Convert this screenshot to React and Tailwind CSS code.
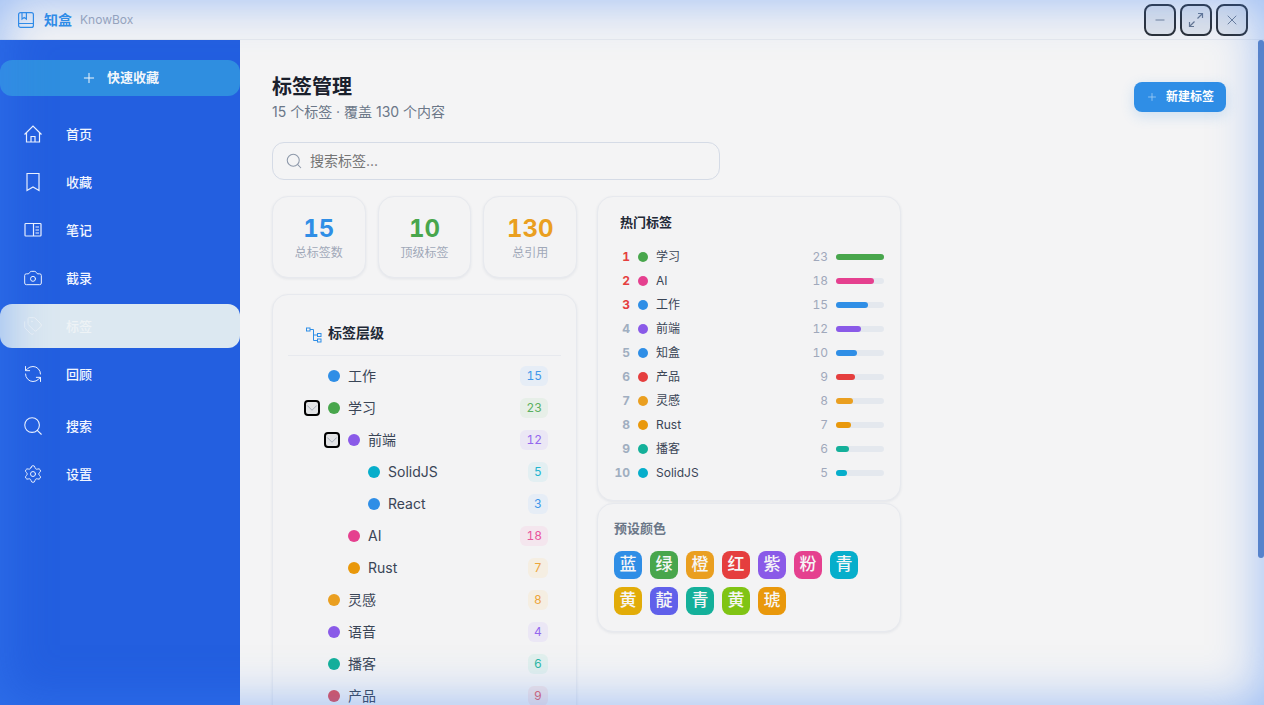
import React from 'react';
import { Camera, Tags, RefreshCcw, Search, Settings, Plus, Minus, X, ChevronDown } from 'lucide-react';

const HomeIcon = ({ className }) => (
  <svg className={className} viewBox="0 0 22 22" fill="none" stroke="currentColor" strokeWidth="1.2">
    <path d="M2.5 11.5 11 3l8.5 8.5M4.5 9.5V19h13V9.5M9 19v-5.5h4V19" />
  </svg>
);

const BookmarkIcon = ({ className }) => (
  <svg className={className} viewBox="0 0 22 22" fill="none" stroke="currentColor" strokeWidth="1.2">
    <path d="M5 2.5h12v17l-6-3.5-6 3.5z" />
  </svg>
);

const NotesIcon = ({ className }) => (
  <svg className={className} viewBox="0 0 22 22" fill="none" stroke="currentColor" strokeWidth="1.2">
    <rect x="3" y="4.5" width="16" height="12.5" rx="0.8" />
    <path d="M11.5 4.5V17M13.5 8h3.5M13.5 11h3.5M13.5 14h3.5" />
  </svg>
);

const LogoIcon = ({ className }) => (
  <svg className={className} viewBox="0 0 18 18" fill="none" stroke="currentColor" strokeWidth="1.2">
    <rect x="1.6" y="1.6" width="14.8" height="14.8" rx="2" />
    <path d="M5 1.6V8l2.2-1.6L9.4 8V1.6M1.6 12.5h14.8" />
  </svg>
);

const ResizeIcon = ({ className }) => (
  <svg className={className} viewBox="0 0 16 16" fill="none" stroke="currentColor" strokeWidth="1.2">
    <path d="M9.5 6.5 14.5 1.5M10 1.5h4.5V6M6.5 9.5l-5 5M1.5 10v4.5H6" />
  </svg>
);

const TreeIcon = ({ className }) => (
  <svg className={className} viewBox="0 0 16 16" fill="none" stroke="currentColor" strokeWidth="1">
    <rect x="0.5" y="1" width="3.5" height="3" />
    <rect x="11.5" y="6.5" width="3.5" height="3" />
    <rect x="11.5" y="12" width="3.5" height="3" />
    <path d="M4 2.5h3.5V13.5h4M7.5 8h4" />
  </svg>
);

const navItems = [
  { label: '首页', icon: HomeIcon, size: 'h-[22px] w-[22px]' },
  { label: '收藏', icon: BookmarkIcon, size: 'h-[22px] w-[22px]' },
  { label: '笔记', icon: NotesIcon, size: 'h-[22px] w-[22px]' },
  { label: '截录', icon: Camera, size: 'h-5 w-5 mx-px' },
  { label: '标签', icon: Tags, size: 'h-5 w-5 mx-px', active: true },
  { label: '回顾', icon: RefreshCcw, size: 'h-5 w-5 mx-px' },
];

const navItemsBottom = [
  { label: '搜索', icon: Search, size: 'h-[22px] w-[22px]' },
  { label: '设置', icon: Settings, size: 'h-5 w-5 mx-px' },
];

const treeRows = [
  { name: '工作', count: 15, level: 0, dot: 'bg-[#2f8ee6]', badge: 'bg-[#e6edf6] text-[#3f97ea]' },
  { name: '学习', count: 23, level: 0, open: true, dot: 'bg-[#48a64c]', badge: 'bg-[#e7efe8] text-[#5bb060]' },
  { name: '前端', count: 12, level: 1, open: true, dot: 'bg-[#8a5ae8]', badge: 'bg-[#ebe7f5] text-[#9467ee]' },
  { name: 'SolidJS', count: 5, level: 2, dot: 'bg-[#06aecb]', badge: 'bg-[#e3eff2] text-[#22b5d0]' },
  { name: 'React', count: 3, level: 2, dot: 'bg-[#2f8ee6]', badge: 'bg-[#e6edf6] text-[#3f97ea]' },
  { name: 'AI', count: 18, level: 1, dot: 'bg-[#e5408f]', badge: 'bg-[#f4e6ee] text-[#e9549c]' },
  { name: 'Rust', count: 7, level: 1, dot: 'bg-[#e9980b]', badge: 'bg-[#f5eee2] text-[#eda53a]' },
  { name: '灵感', count: 8, level: 0, dot: 'bg-[#ea9f20]', badge: 'bg-[#f5eee2] text-[#eda53a]' },
  { name: '语音', count: 4, level: 0, dot: 'bg-[#8a5ae8]', badge: 'bg-[#ebe7f5] text-[#9467ee]' },
  { name: '播客', count: 6, level: 0, dot: 'bg-[#14b09a]', badge: 'bg-[#e2f0ed] text-[#2cb8a4]' },
  { name: '产品', count: 9, level: 0, dot: 'bg-[#e0505a]', badge: 'bg-[#f2e4e6] text-[#e2606a]' },
];

const levelPadding = ['pl-[40px]', 'pl-[60px]', 'pl-[80px]'];
const chevronLeft = ['left-[16px]', 'left-[36px]', 'left-[56px]'];

const hotTags = [
  { name: '学习', count: 23, dot: 'bg-[#48a64c]', bar: 'w-full' },
  { name: 'AI', count: 18, dot: 'bg-[#e5408f]', bar: 'w-[79%]' },
  { name: '工作', count: 15, dot: 'bg-[#2f8ee6]', bar: 'w-[66%]' },
  { name: '前端', count: 12, dot: 'bg-[#8a5ae8]', bar: 'w-[52%]' },
  { name: '知盒', count: 10, dot: 'bg-[#2f8ee6]', bar: 'w-[44%]' },
  { name: '产品', count: 9, dot: 'bg-[#e53e3e]', bar: 'w-[40%]' },
  { name: '灵感', count: 8, dot: 'bg-[#ea9f20]', bar: 'w-[35%]' },
  { name: 'Rust', count: 7, dot: 'bg-[#e9980b]', bar: 'w-[31%]' },
  { name: '播客', count: 6, dot: 'bg-[#14b09a]', bar: 'w-[27%]' },
  { name: 'SolidJS', count: 5, dot: 'bg-[#06aecb]', bar: 'w-[22%]' },
];

const swatches = [
  { name: '蓝', color: 'bg-[#2f8ee6]' },
  { name: '绿', color: 'bg-[#48a64c]' },
  { name: '橙', color: 'bg-[#ea9f20]' },
  { name: '红', color: 'bg-[#e53e3e]' },
  { name: '紫', color: 'bg-[#8a5ae8]' },
  { name: '粉', color: 'bg-[#e5408f]' },
  { name: '青', color: 'bg-[#06aecb]' },
  { name: '黄', color: 'bg-[#e2ac08]' },
  { name: '靛', color: 'bg-[#6060ea]' },
  { name: '青', color: 'bg-[#14b09a]' },
  { name: '黄', color: 'bg-[#80c414]' },
  { name: '琥', color: 'bg-[#e9980b]' },
];

const stats = [
  { value: 15, label: '总标签数', color: 'text-[#2f8ee6]' },
  { value: 10, label: '顶级标签', color: 'text-[#48a64c]' },
  { value: 130, label: '总引用', color: 'text-[#ea9f20]' },
];

const cardClass = 'rounded-2xl border border-[#e7e9ee] bg-[#f3f3f4] shadow-[0_1px_3px_rgba(30,50,90,0.08)]';

const NavItem = ({ item }) => {
  const Icon = item.icon;
  return (
    <div
      className={`flex h-11 items-center gap-[22px] rounded-xl pl-[22px] text-[13px] font-medium ${
        item.active ? 'bg-[#dce8f1] text-[#eef3f6]' : 'text-[#f2f6ff]'
      }`}
    >
      <Icon className={item.size} strokeWidth={1.2} />
      <span className="mt-0.5">{item.label}</span>
    </div>
  );
};

const WindowButton = ({ children }) => (
  <button className="flex h-8 w-8 items-center justify-center rounded-lg border-2 border-[#2a2e33] bg-[#e1e4e9] text-[#66748a]">
    {children}
  </button>
);

const TreeRow = ({ row }) => (
  <div className={`relative flex h-8 items-center pr-[13px] ${levelPadding[row.level]}`}>
    {row.open && (
      <button
        className={`absolute top-2 flex h-4 w-4 items-center justify-center rounded-[4px] border-2 border-black bg-[#e2e3e5] text-[#98a0b0] ${chevronLeft[row.level]}`}
      >
        <ChevronDown className="h-[18px] w-[18px] shrink-0" strokeWidth={1.1} />
      </button>
    )}
    <span className={`h-3 w-3 rounded-full ${row.dot}`} />
    <span className="ml-2 flex-1 text-sm text-[#3a4556]">{row.name}</span>
    <span className={`flex h-5 min-w-5 items-center justify-center rounded-md px-1.5 text-xs tabular-nums ${row.badge}`}>
      {row.count}
    </span>
  </div>
);

const HotRow = ({ tag, rank }) => (
  <div className="flex h-6 items-center">
    <span className={`w-4 text-right text-xs font-bold tabular-nums ${rank <= 3 ? 'text-[#e53e3e]' : 'text-[#a0aec0]'}`}>{rank}</span>
    <span className={`ml-2 h-2.5 w-2.5 rounded-full ${tag.dot}`} />
    <span className="ml-2 flex-1 text-xs text-[#3a4556]">{tag.name}</span>
    <span className="text-xs tabular-nums text-[#a0a8bb]">{tag.count}</span>
    <div className="ml-2 h-1.5 w-12 rounded-full bg-[#e4e8ee]">
      <div className={`h-1.5 rounded-full ${tag.dot} ${tag.bar}`} />
    </div>
  </div>
);

export default function App() {
  return (
    <div className="relative flex h-screen w-full flex-col overflow-hidden bg-[#f4f4f5] font-['Inter','Noto_Sans_CJK_SC',sans-serif]">
      <header className="flex h-10 shrink-0 items-center justify-between border-b border-[#e6e8ec] bg-[#f4f4f5] pl-[17px] pr-4">
        <div className="flex items-center">
          <LogoIcon className="h-[18px] w-[18px] text-[#2f8ee6]" />
          <span className="ml-[9px] text-sm font-semibold text-[#2f8ee6]">知盒</span>
          <span className="ml-2 text-xs text-[#a0a8b8]">KnowBox</span>
        </div>
        <div className="flex gap-1">
          <WindowButton><Minus className="h-3.5 w-3.5" strokeWidth={1.5} /></WindowButton>
          <WindowButton><ResizeIcon className="h-4 w-4" /></WindowButton>
          <WindowButton><X className="h-4 w-4" strokeWidth={1.4} /></WindowButton>
        </div>
      </header>

      <div className="relative flex min-h-0 flex-1">
        <aside className="flex w-60 shrink-0 flex-col bg-[#235fe0] pt-5">
          <button className="flex h-9 items-center justify-center gap-2.5 rounded-xl bg-[#2f8ee0] text-[13px] font-semibold text-[#f2f6fb]">
            <Plus className="h-4 w-4" strokeWidth={1.5} />
            快速收藏
          </button>
          <nav className="mt-4 flex flex-col gap-1">
            {navItems.map((item) => (
              <NavItem key={item.label} item={item} />
            ))}
          </nav>
          <nav className="mt-2 flex flex-col gap-1">
            {navItemsBottom.map((item) => (
              <NavItem key={item.label} item={item} />
            ))}
          </nav>
        </aside>

        <main className="min-w-0 flex-1 overflow-hidden pl-8 pr-[38px] pt-8">
          <div className="flex items-start justify-between">
            <div>
              <h1 className="pt-px text-xl font-bold leading-7 text-[#1a202c]">标签管理</h1>
              <p className="mt-px text-sm text-[#6b7788]">15 个标签 · 覆盖 130 个内容</p>
            </div>
            <button className="mt-[10px] flex h-[30px] w-[92px] items-center justify-center gap-2 rounded-lg bg-[#2f8ee6] text-xs font-semibold text-white shadow-[0_4px_14px_rgba(47,142,230,0.2)]">
              <Plus className="h-3 w-3 text-[#a8d2f5]" strokeWidth={1.5} />
              新建标签
            </button>
          </div>

          <div className="mt-5 flex h-[38px] w-[448px] shrink-0 items-center rounded-xl border border-[#d5dbe6] px-3">
            <Search className="h-[18px] w-[18px] text-[#8e99aa]" strokeWidth={1.4} />
            <span className="ml-[7px] text-sm text-[#757575]">搜索标签...</span>
          </div>

          <div className="mt-4 flex items-start gap-5">
            <div className="flex w-[305px] shrink-0 flex-col gap-4">
              <div className="grid grid-cols-3 gap-3">
                {stats.map((stat) => (
                  <div key={stat.label} className={`flex h-[82px] flex-col items-center justify-center ${cardClass}`}>
                    <span className={`text-2xl font-bold leading-8 tabular-nums ${stat.color}`}>{stat.value}</span>
                    <span className="text-xs text-[#a0a8b8]">{stat.label}</span>
                  </div>
                ))}
              </div>
              <div className={`px-[15px] pb-4 pt-6 ${cardClass}`}>
                <div className="flex h-[37px] items-start border-b border-[#e7e9ee] pl-[18px] pt-1">
                  <TreeIcon className="mt-1 h-4 w-4 text-[#2f8ee6]" />
                  <span className="ml-[6px] text-sm font-semibold text-[#1f2937]">标签层级</span>
                </div>
                <div className="mt-1">
                  {treeRows.map((row) => (
                    <TreeRow key={row.name} row={row} />
                  ))}
                </div>
              </div>
            </div>

            <div className="flex w-[304px] shrink-0 flex-col gap-0.5">
              <div className={`h-[305px] px-4 pt-[15px] ${cardClass}`}>
                <h2 className="pl-1.5 text-[13px] font-semibold leading-5 text-[#1f2937]">热门标签</h2>
                <div className="mt-[13px]">
                  {hotTags.map((tag, i) => (
                    <HotRow key={tag.name} tag={tag} rank={i + 1} />
                  ))}
                </div>
              </div>
              <div className={`h-[129px] px-4 pt-[14px] ${cardClass}`}>
                <h3 className="text-[13px] font-semibold leading-5 text-[#6b7788]">预设颜色</h3>
                <div className="mt-[13px] flex w-[260px] flex-wrap gap-2">
                  {swatches.map((swatch, i) => (
                    <div
                      key={i}
                      className={`flex h-7 w-7 items-center justify-center rounded-lg text-[17px] font-medium text-[#f6f6f6] ${swatch.color}`}
                    >
                      {swatch.name}
                    </div>
                  ))}
                </div>
              </div>
            </div>
          </div>
        </main>

        <div className="absolute right-0 top-0 h-[518px] w-1.5 rounded-full bg-[#5f84c0]" />
      </div>

      <div className="pointer-events-none absolute inset-0 shadow-[inset_0_0_50px_rgba(59,130,246,0.5)]" />
    </div>
  );
}
